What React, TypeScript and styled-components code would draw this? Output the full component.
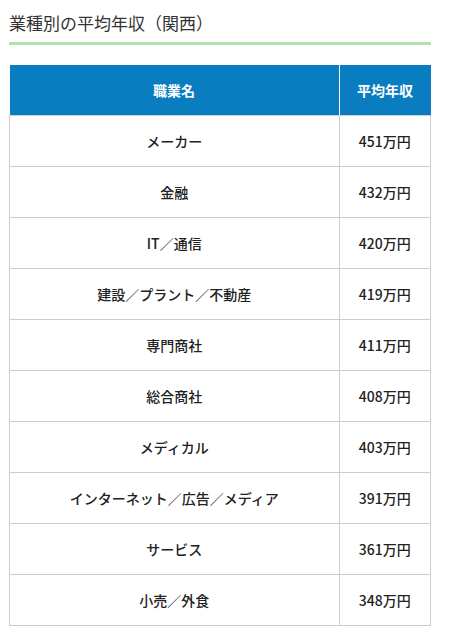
import styled, { createGlobalStyle } from "styled-components";

const GlobalStyle = createGlobalStyle`
  body {
    margin: 0;
    background: #ffffff;
    font-family: "Noto Sans CJK JP", "Noto Sans", sans-serif;
  }
`;

const rows = [
  { name: "メーカー", salary: "451万円" },
  { name: "金融", salary: "432万円" },
  { name: "IT／通信", salary: "420万円" },
  { name: "建設／プラント／不動産", salary: "419万円" },
  { name: "専門商社", salary: "411万円" },
  { name: "総合商社", salary: "408万円" },
  { name: "メディカル", salary: "403万円" },
  { name: "インターネット／広告／メディア", salary: "391万円" },
  { name: "サービス", salary: "361万円" },
  { name: "小売／外食", salary: "348万円" },
];

const App = () => {
  return (
    <>
      <GlobalStyle />
      <Page>
        <Title>業種別の平均年収（関西）</Title>
        <Table>
          <thead>
            <tr>
              <HeadCell>職業名</HeadCell>
              <HeadCell narrow>平均年収</HeadCell>
            </tr>
          </thead>
          <tbody>
            {rows.map((row) => (
              <tr key={row.name}>
                <Cell>{row.name}</Cell>
                <Cell narrow>{row.salary}</Cell>
              </tr>
            ))}
          </tbody>
        </Table>
      </Page>
    </>
  );
};

export default App;

const Page = styled.div`
  padding: 10px 19px 0 9px;
`;

const Title = styled.h2`
  margin: 0;
  padding: 0 0 6px 0;
  font-size: 17px;
  font-weight: 400;
  line-height: 26px;
  color: #333333;
  border-bottom: 3px solid #b5e0b0;
`;

const Table = styled.table`
  margin-top: 20px;
  width: 100%;
  border-collapse: collapse;
  table-layout: fixed;
`;

const HeadCell = styled.th<{ narrow?: boolean }>`
  width: ${(props) => (props.narrow ? "91px" : "auto")};
  height: 50px;
  padding: 0;
  background: #0a7cc0;
  color: #ffffff;
  font-size: 14px;
  font-weight: 700;
  text-align: center;
  border-left: ${(props) => (props.narrow ? "1px solid #ffffff" : "none")};
`;

const Cell = styled.td<{ narrow?: boolean }>`
  height: 50px;
  padding: 0;
  border: 1px solid #cccccc;
  color: #222222;
  font-size: 14px;
  font-weight: 500;
  text-align: center;
`;
